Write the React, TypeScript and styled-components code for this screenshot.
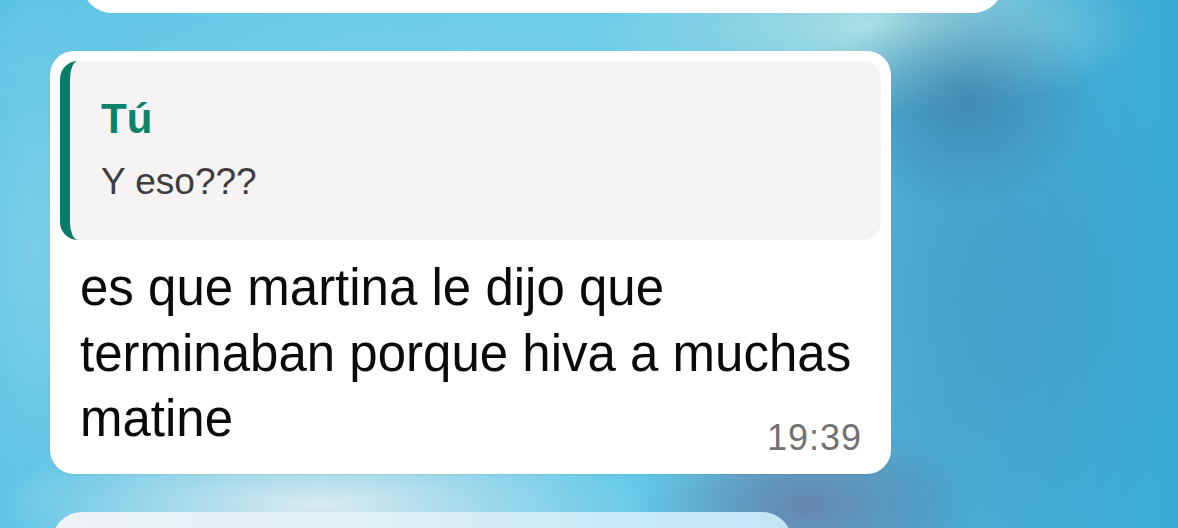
import React from "react";
import styled, { createGlobalStyle } from "styled-components";

const Global = createGlobalStyle`
  html, body { margin: 0; padding: 0; }
  body { font-family: "Liberation Sans", Arial, sans-serif; }
`;

const Screen = styled.div`
  width: 1178px;
  height: 528px;
  overflow: hidden;
  display: flex;
  flex-direction: column;
  background:
    radial-gradient(ellipse 130px 110px at 965px 100px, rgba(62, 128, 168, 0.75), rgba(62, 128, 168, 0) 100%),
    radial-gradient(ellipse 170px 90px at 805px 505px, rgba(104, 124, 166, 0.85), rgba(104, 124, 166, 0) 100%),
    radial-gradient(ellipse 330px 80px at 320px 505px, rgba(226, 236, 240, 0.95), rgba(226, 236, 240, 0) 100%),
    radial-gradient(ellipse 280px 90px at 870px 25px, rgba(176, 226, 228, 0.95), rgba(176, 226, 228, 0) 100%),
    radial-gradient(ellipse 520px 100px at 460px 55px, rgba(132, 210, 234, 0.55), rgba(132, 210, 234, 0) 100%),
    radial-gradient(ellipse 80px 260px at 35px 250px, rgba(150, 214, 234, 0.55), rgba(150, 214, 234, 0) 100%),
    radial-gradient(ellipse 200px 300px at 1000px 300px, rgba(70, 150, 195, 0.5), rgba(70, 150, 195, 0) 100%),
    linear-gradient(90deg, #5ec4e4 0%, #63c9e7 55%, #4caed3 78%, #3bacd6 100%);
`;

const PrevBubble = styled.div`
  margin: -47px 0 0 82px;
  width: 921px;
  height: 60px;
  flex-shrink: 0;
  background: #ffffff;
  border-radius: 30px;
`;

const Bubble = styled.div`
  margin: 38px 0 0 50px;
  width: 841px;
  box-sizing: border-box;
  padding: 10px;
  flex-shrink: 0;
  background: #ffffff;
  border-radius: 24px;
  box-shadow: 0 1px 2px rgba(0, 0, 0, 0.06);
`;

const Quote = styled.div`
  height: 179px;
  box-sizing: border-box;
  padding: 33px 0 0 31px;
  background: #f5f3f4;
  border-left: 10px solid #077d67;
  border-radius: 18px;
`;

const QuoteName = styled.div`
  font-size: 42px;
  line-height: 50px;
  font-weight: 700;
  color: #0a8369;
`;

const QuoteText = styled.div`
  margin-top: 16px;
  font-size: 37px;
  line-height: 44px;
  color: #3d3c3e;
`;

const Body = styled.div`
  padding: 15px 19px 12px 20px;
`;

const Text = styled.p`
  margin: 0;
  font-size: 51px;
  line-height: 65.5px;
  color: #0a0a0a;
`;

const Time = styled.span`
  float: right;
  margin: 32px 0 -32px 20px;
  font-size: 36px;
  line-height: 40px;
  letter-spacing: 1px;
  color: #727274;
`;

const NextBubble = styled.div`
  margin: 38px 0 0 52px;
  width: 740px;
  height: 80px;
  flex-shrink: 0;
  border-radius: 30px;
  background: linear-gradient(90deg, #eef2f4 0%, #dff0f6 45%, #c6e9f8 80%, #c4e4f4 100%);
`;

export default function App() {
  return (
    <>
      <Global />
      <Screen>
        <PrevBubble />
        <Bubble>
          <Quote>
            <QuoteName>Tú</QuoteName>
            <QuoteText>Y eso???</QuoteText>
          </Quote>
          <Body>
            <Text>
              es que martina le dijo que terminaban porque hiva a muchas matine
              <Time>19:39</Time>
            </Text>
          </Body>
        </Bubble>
        <NextBubble />
      </Screen>
    </>
  );
}
